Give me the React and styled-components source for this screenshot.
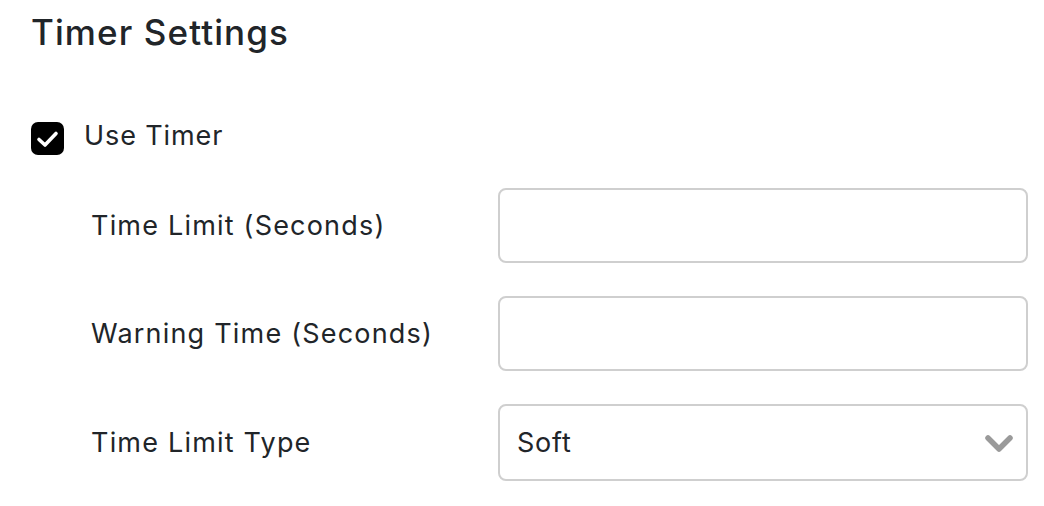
import styled, { createGlobalStyle } from "styled-components";

const GlobalStyle = createGlobalStyle`
  html, body {
    margin: 0;
    padding: 0;
    background: #ffffff;
  }
  body {
    font-family: "Inter", "Liberation Sans", sans-serif;
    color: #212529;
  }
`;

const Page = styled.div`
  padding: 12px 0 0 31px;
  width: 997px;
`;

const Title = styled.h2`
  margin: 0;
  font-size: 35px;
  font-weight: 500;
  line-height: 40px;
  letter-spacing: 1.1px;
  color: #212529;
`;

const CheckRow = styled.label`
  display: flex;
  align-items: center;
  gap: 20px;
  margin-top: 65px;
  font-size: 27px;
  line-height: 34px;
  letter-spacing: 0.9px;
`;

const CheckBox = styled.span`
  width: 33px;
  height: 33px;
  border-radius: 7px;
  background: #000;
  display: flex;
  align-items: center;
  justify-content: center;
  margin-top: 5px;
`;

const Fields = styled.div`
  display: flex;
  flex-direction: column;
  gap: 33px;
  margin-top: 33px;
  padding-left: 60px;
`;

const Row = styled.div`
  display: grid;
  grid-template-columns: 407px 1fr;
  align-items: center;
`;

const Label = styled.span`
  font-size: 27px;
  letter-spacing: 1.2px;
  color: #212529;
`;

const Box = styled.div`
  position: relative;
  height: ${(p) => p.$h || 75}px;
  border: 2px solid #cfcfcf;
  border-radius: 8px;
  box-sizing: border-box;
  display: flex;
  align-items: center;
  padding: 0 17px;
  font-size: 27px;
  letter-spacing: 0.8px;
  color: #212529;
`;

const Chevron = styled.svg`
  position: absolute;
  right: 12px;
  top: 50%;
  transform: translateY(-50%);
`;

export default function App() {
  return (
    <>
      <GlobalStyle />
      <Page>
        <Title>Timer Settings</Title>
        <CheckRow>
          <CheckBox>
            <svg width="23" height="18" viewBox="0 0 23 18">
              <path d="M3 9.5 L9 15 L20 3.5" fill="none" stroke="#fff" strokeWidth="3.6" strokeLinecap="round" strokeLinejoin="round" />
            </svg>
          </CheckBox>
          Use Timer
        </CheckRow>
        <Fields>
          <Row>
            <Label>Time Limit (Seconds)</Label>
            <Box />
          </Row>
          <Row>
            <Label>Warning Time (Seconds)</Label>
            <Box />
          </Row>
          <Row>
            <Label>Time Limit Type</Label>
            <Box $h={77}>
              Soft
              <Chevron width="30" height="22" viewBox="0 0 30 22">
                <path d="M4 6 L15 17 L26 6" fill="none" stroke="#9a9a9a" strokeWidth="5.5" strokeLinecap="round" strokeLinejoin="round" />
              </Chevron>
            </Box>
          </Row>
        </Fields>
      </Page>
    </>
  );
}
